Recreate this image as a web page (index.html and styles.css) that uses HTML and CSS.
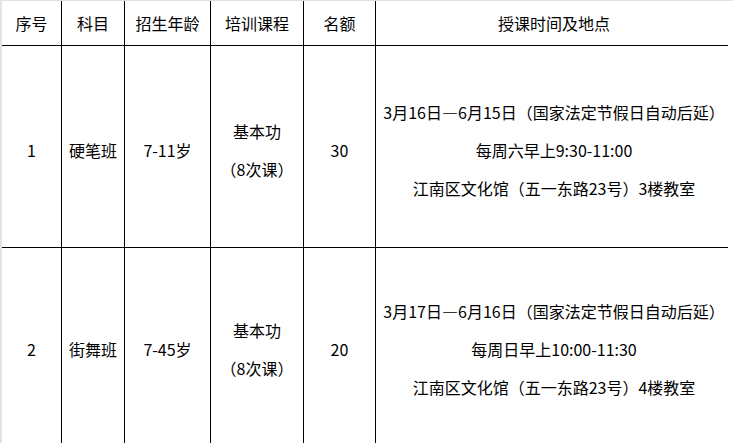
FILE: index.html
```html
<!DOCTYPE html>
<html lang="zh-CN">
<head>
<meta charset="utf-8">
<title>课程表</title>
<link rel="stylesheet" href="styles.css">
</head>
<body>
<div class="frame">
  <div class="table" role="table">
    <div class="cell head" role="columnheader">序号</div>
    <div class="cell head" role="columnheader">科目</div>
    <div class="cell head" role="columnheader">招生年龄</div>
    <div class="cell head" role="columnheader">培训课程</div>
    <div class="cell head" role="columnheader">名额</div>
    <div class="cell head" role="columnheader">授课时间及地点</div>

    <div class="cell first" role="cell">1</div>
    <div class="cell first" role="cell">硬笔班</div>
    <div class="cell first" role="cell">7-11岁</div>
    <div class="cell first" role="cell"><p>基本功</p><p>（8次课）</p></div>
    <div class="cell first" role="cell">30</div>
    <div class="cell first" role="cell"><p>3月16日—6月15日（国家法定节假日自动后延）</p><p>每周六早上9:30-11:00</p><p>江南区文化馆（五一东路23号）3楼教室</p></div>

    <div class="cell" role="cell">2</div>
    <div class="cell" role="cell">街舞班</div>
    <div class="cell" role="cell">7-45岁</div>
    <div class="cell" role="cell"><p>基本功</p><p>（8次课）</p></div>
    <div class="cell" role="cell">20</div>
    <div class="cell" role="cell"><p>3月17日—6月16日（国家法定节假日自动后延）</p><p>每周日早上10:00-11:30</p><p>江南区文化馆（五一东路23号）4楼教室</p></div>
  </div>
</div>
</body>
</html>
```

FILE: styles.css
```css
html, body {
  margin: 0;
  padding: 0;
  background: #ffffff;
}

.frame {
  width: 731px;
  height: 442px;
  overflow: hidden;
  border-top: 1px solid #e3e3e3;
  border-left: 2px solid #e3e3e3;
}

.table {
  display: grid;
  grid-template-columns: 59px 62px 85px 92px 71px 356px;
  grid-template-rows: 44px 201px 201px;
  gap: 1px;
  padding-right: 1px;
  width: 725px;
  background: #000000;
  font-family: "Noto Sans CJK SC", "Noto Sans", sans-serif;
  font-size: 16px;
  color: #000000;
}

.cell {
  background: #ffffff;
  display: flex;
  flex-direction: column;
  align-items: center;
  justify-content: center;
  text-align: center;
  line-height: 38px;
  white-space: nowrap;
}

.head {
  line-height: 20px;
}

.first {
  padding-top: 7px;
}

.cell p {
  margin: 0;
}
```
